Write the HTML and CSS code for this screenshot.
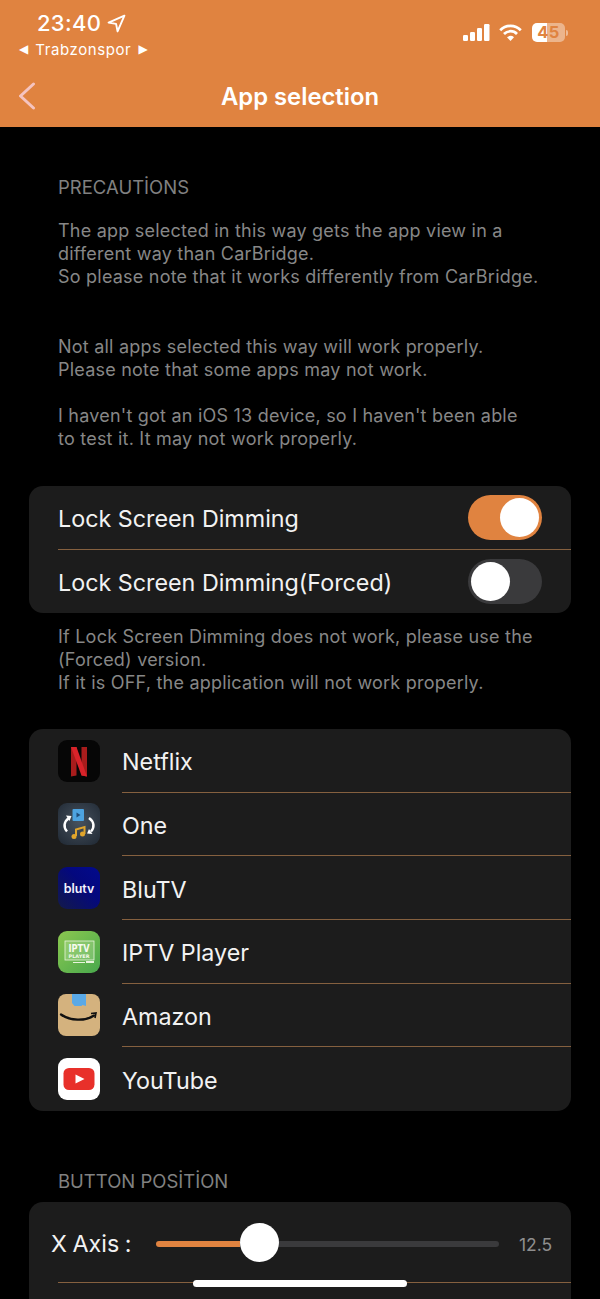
FILE: index.html
```html
<!DOCTYPE html>
<html lang="en">
<head>
<meta charset="utf-8">
<title>App selection</title>
<link rel="stylesheet" href="styles.css">
</head>
<body>
<div class="screen">
  <header class="header">
    <div class="status">
      <div class="status-left">
        <div class="time-row">
          <span class="time">23:40</span>
          <svg class="loc" viewBox="0 0 18 18"><path d="M16.500 1.500 L1.500 8.200 L8.600 9.400 L10 16.500 Z" fill="none" stroke="#fff" stroke-width="1.800" stroke-linejoin="round"/></svg>
        </div>
        <div class="carrier"><span class="tri">◀</span><span>Trabzonspor</span><span class="tri">▶</span></div>
      </div>
      <div class="status-right">
        <svg class="signal" viewBox="0 0 27 17"><rect x="0" y="11" width="5" height="6" rx="1.200" fill="#fff"/><rect x="7" y="8" width="5" height="9" rx="1.200" fill="#fff"/><rect x="14" y="4" width="5" height="13" rx="1.200" fill="#fff"/><rect x="21" y="0" width="5.500" height="17" rx="1.200" fill="#fff"/></svg>
        <svg class="wifi" viewBox="0 0 23 17"><path d="M1.200 6.200 A14.500 14.500 0 0 1 21.800 6.200" fill="none" stroke="#fff" stroke-width="2.700"/><path d="M5 10 A9 9 0 0 1 18 10" fill="none" stroke="#fff" stroke-width="2.700"/><path d="M11.500 17 L8 13.300 A5 5 0 0 1 15 13.300 Z" fill="#fff"/></svg>
        <div class="battery"><span class="battery-body">45</span><span class="battery-cap"></span></div>
      </div>
    </div>
    <nav class="nav">
      <svg class="back" viewBox="0 0 18 28"><path d="M14.500 2 L1.500 14 L14.500 26" fill="none" stroke="#f5c4c0" stroke-width="3" stroke-linecap="round" stroke-linejoin="round"/></svg>
      <h1 class="title">App selection</h1>
    </nav>
  </header>

  <main class="content">
    <h2 class="section-title first">PRECAUTİONS</h2>
    <p class="note">The app selected in this way gets the app view in a<br>different way than CarBridge.<br>So please note that it works differently from CarBridge.</p>
    <p class="note gap-large">Not all apps selected this way will work properly.<br>Please note that some apps may not work.</p>
    <p class="note gap-small">I haven't got an iOS 13 device, so I haven't been able<br>to test it. It may not work properly.</p>

    <section class="card card-toggles">
      <div class="row row-toggle">
        <span class="label">Lock Screen Dimming</span>
        <span class="toggle on"><span class="knob"></span></span>
      </div>
      <div class="row row-toggle">
        <span class="label">Lock Screen Dimming(Forced)</span>
        <span class="toggle"><span class="knob"></span></span>
      </div>
    </section>
    <p class="note after-card">If Lock Screen Dimming does not work, please use the<br>(Forced) version.<br>If it is OFF, the application will not work properly.</p>

    <section class="card card-apps">
      <div class="row row-app">
        <svg class="app-icon" viewBox="0 0 42 42"><rect width="42" height="42" rx="9" fill="#060606"/><path d="M13 7h5.500v28.500l-5.500 1z" fill="#a81c1c"/><path d="M23.500 7H29v29.500l-5.500-1z" fill="#a81c1c"/><path d="M13 7h5.500L29 36.500l-5.500-1z" fill="#d8232a"/></svg>
        <span class="label">Netflix</span>
      </div>
      <div class="row row-app">
        <svg class="app-icon" viewBox="0 0 42 42"><defs><radialGradient id="oneBg" cx=".5" cy=".45" r=".75"><stop offset="0" stop-color="#47525e"/><stop offset="1" stop-color="#1e2732"/></radialGradient></defs><rect width="42" height="42" rx="9" fill="url(#oneBg)"/><rect x="14.500" y="6" width="11.500" height="12" rx="1" fill="#4da3e0"/><path d="M18.500 9.500l4 2.500-4 2.500z" fill="#1f4c78"/><path d="M11 15C6 18.500 5 24 9 28.500" fill="none" stroke="#fff" stroke-width="2.500"/><path d="M8 12.500l5.500.5-2 5z" fill="#fff"/><path d="M31 15C36 18.500 37 24 33 28.500" fill="none" stroke="#fff" stroke-width="2.500"/><path d="M34.500 31l-5.500-.5 2-4.500z" fill="#fff"/><path d="M18 33V26.500l8.500-2.500V31" fill="none" stroke="#e0a52c" stroke-width="2"/><circle cx="16" cy="33.500" r="2.500" fill="#e0a52c"/><circle cx="24.500" cy="31" r="2.500" fill="#e0a52c"/></svg>
        <span class="label">One</span>
      </div>
      <div class="row row-app">
        <svg class="app-icon" viewBox="0 0 42 42"><defs><linearGradient id="bluBg" x1="0" y1="1" x2="1" y2="0"><stop offset="0" stop-color="#131a4a"/><stop offset=".6" stop-color="#04087e"/><stop offset="1" stop-color="#020a8c"/></linearGradient></defs><rect width="42" height="42" rx="9" fill="url(#bluBg)"/><text class="blu-text" x="21" y="25.500" text-anchor="middle">blutv</text></svg>
        <span class="label">BluTV</span>
      </div>
      <div class="row row-app">
        <svg class="app-icon" viewBox="0 0 42 42"><defs><linearGradient id="iptvBg" x1="0" y1="0" x2="1" y2="1"><stop offset="0" stop-color="#8cc850"/><stop offset="1" stop-color="#48a84c"/></linearGradient></defs><rect width="42" height="42" rx="9" fill="url(#iptvBg)"/><rect x="7" y="10" width="29" height="19" fill="#d8eec8" fill-opacity=".25" stroke="#e8f4dc" stroke-width=".8"/><text class="iptv-big" x="10.500" y="21" textLength="21" lengthAdjust="spacingAndGlyphs">IPTV</text><text class="iptv-small" x="10.500" y="26.500" textLength="21" lengthAdjust="spacingAndGlyphs">PLAYER</text><rect x="15" y="31" width="12" height="1" fill="#e8f4dc"/><rect x="28" y="30" width="8" height="2" fill="#e8f4dc"/></svg>
        <span class="label">IPTV Player</span>
      </div>
      <div class="row row-app">
        <svg class="app-icon" viewBox="0 0 42 42"><rect width="42" height="42" rx="8" fill="#d4b27e"/><path d="M14 0h14v12l-3.500-1-1 1H16.500L14 9z" fill="#5aa9e6"/><path d="M3 20.500C12 27 27 27.500 36 21.500" fill="none" stroke="#111" stroke-width="2.300" stroke-linecap="round"/><path d="M33 19.500l5-.5-1 5" fill="none" stroke="#111" stroke-width="1.600"/></svg>
        <span class="label">Amazon</span>
      </div>
      <div class="row row-app">
        <svg class="app-icon" viewBox="0 0 42 42"><rect width="42" height="42" rx="9" fill="#fff"/><rect x="5.500" y="10" width="31" height="22" rx="5.500" fill="#e8302a"/><path d="M17.500 16.500l9 4.500-9 4.500z" fill="#fff"/></svg>
        <span class="label">YouTube</span>
      </div>
    </section>

    <h2 class="section-title">BUTTON POSİTİON</h2>
    <section class="card card-sliders">
      <div class="row-slider">
        <span class="label slider-label">X Axis :</span>
        <div class="slider">
          <span class="slider-fill"></span>
          <span class="slider-knob"></span>
          <span class="slider-rest"></span>
        </div>
        <span class="value">12.5</span>
      </div>
    </section>
  </main>
  <div class="home-indicator"></div>
</div>
</body>
</html>
```
FILE: styles.css
```css
* { box-sizing: border-box; }
html, body { margin: 0; padding: 0; background: #000; }
.screen {
  position: relative;
  width: 600px;
  height: 1299px;
  overflow: hidden;
  background: #000;
  color: #fff;
  font-family: Inter, "Liberation Sans", sans-serif;
}
.header {
  height: 127px;
  background: #e08340;
  display: flex;
  flex-direction: column;
}
.status {
  height: 64px;
  display: flex;
  justify-content: space-between;
  align-items: flex-start;
  padding: 10px 32px 0 19px;
}
.status-left { display: flex; flex-direction: column; }
.time-row { display: flex; align-items: center; gap: 6px; padding-left: 18px; height: 26px; }
.time { font-size: 22px; font-weight: 500; letter-spacing: .3px; }
.loc { width: 19px; height: 19px; }
.carrier { display: flex; align-items: center; gap: 7px; font-size: 15px; letter-spacing: .6px; margin-top: 1px; height: 24px; }
.tri { font-family: "DejaVu Sans", sans-serif; font-size: 12px; letter-spacing: 0; }
.status-right { display: flex; align-items: center; padding-top: 13px; }
.signal { width: 27px; height: 17px; margin-right: 9px; }
.wifi { width: 23px; height: 17px; margin-right: 10px; }
.battery { display: flex; align-items: center; gap: 1px; }
.battery-body {
  width: 33px;
  height: 19px;
  border-radius: 5px;
  background: linear-gradient(90deg, #fff 45%, rgba(255,255,255,.4) 45%);
  color: #e08340;
  font-size: 16.500px;
  font-weight: 700;
  line-height: 19px;
  text-align: center;
  letter-spacing: .5px;
}
.battery-cap { width: 2px; height: 6px; border-radius: 0 2px 2px 0; background: rgba(255,255,255,.45); }
.nav { position: relative; height: 63px; display: flex; align-items: center; justify-content: center; }
.back { position: absolute; left: 19px; top: 18px; width: 18px; height: 28px; }
.title { margin: 0; font-size: 23.800px; font-weight: 600; padding-top: 1px; }

.content { padding: 0 29px; }
.section-title {
  margin: 0;
  padding: 59px 29px 0;
  font-size: 18.500px;
  font-weight: 400;
  line-height: 22px;
  color: #818181;
}
.section-title.first { padding-top: 49px; padding-bottom: 21px; }
.note {
  margin: 0;
  padding: 0 29px;
  font-size: 18px;
  letter-spacing: .22px;
  line-height: 23px;
  color: #878787;
}
.gap-large { margin-top: 47px; }
.gap-small { margin-top: 23px; }
.card { background: #1c1c1c; border-radius: 14px; overflow: hidden; }
.card-toggles { margin-top: 36px; }
.after-card { margin-top: 12px; }
.card-apps { margin-top: 35px; }
.card-sliders { margin-top: 10px; height: 110px; }
.row { display: flex; align-items: center; }
.label { font-size: 23.300px; color: #f2f2f2; padding-top: 3px; }
.row-toggle {
  height: 63.500px;
  margin-left: 29px;
  justify-content: space-between;
  padding-right: 29px;
  border-bottom: 1px solid #85603f;
}
.row-toggle:last-child { border-bottom: 0; }
.toggle {
  width: 74px;
  height: 45px;
  border-radius: 23px;
  background: #3a3a3c;
  padding: 3px;
  display: flex;
}
.toggle.on { background: #e08340; justify-content: flex-end; }
.knob { width: 39px; height: 39px; border-radius: 50%; background: #fff; }
.row-app { height: 63.650px; padding-left: 29px; gap: 22px; }
.row-app .label { flex: 1; height: 100%; display: flex; align-items: center; border-bottom: 1px solid #85603f; }
.row-app:last-child .label { border-bottom: 0; }
.app-icon { width: 42px; height: 42px; flex: none; }
.blu-text { font-family: Inter, sans-serif; font-size: 12.500px; font-weight: 600; fill: #f4f4ff; }
.iptv-big { font-family: "DejaVu Sans", sans-serif; font-size: 10.500px; font-weight: 700; fill: #f6faf0; }
.iptv-small { font-family: "DejaVu Sans", sans-serif; font-size: 4.800px; font-weight: 700; fill: #f2f8ea; }
.row-slider {
  height: 81px;
  margin-left: 29px;
  padding-top: 1px;
  display: flex;
  align-items: center;
  border-bottom: 1px solid #85603f;
}
.slider-label { margin-left: -7px; width: 105px; flex: none; word-spacing: -1px; padding-top: 2px; }
.slider { width: 343px; height: 39px; display: flex; align-items: center; flex: none; }
.slider-fill { width: 84px; height: 6px; margin-top: 3px; background: #e08340; border-radius: 3px 0 0 3px; }
.slider-knob { width: 39px; height: 39px; border-radius: 50%; background: #fff; flex: none; }
.slider-rest { flex: 1; height: 6px; margin-top: 3px; background: #3a3a3c; border-radius: 0 3px 3px 0; }
.value { margin-left: 20px; padding-top: 4px; font-size: 17.500px; color: #8e8e8e; }
.home-indicator {
  position: absolute;
  left: 193px;
  bottom: 12px;
  width: 214px;
  height: 7px;
  border-radius: 4px;
  background: #fff;
}
```
